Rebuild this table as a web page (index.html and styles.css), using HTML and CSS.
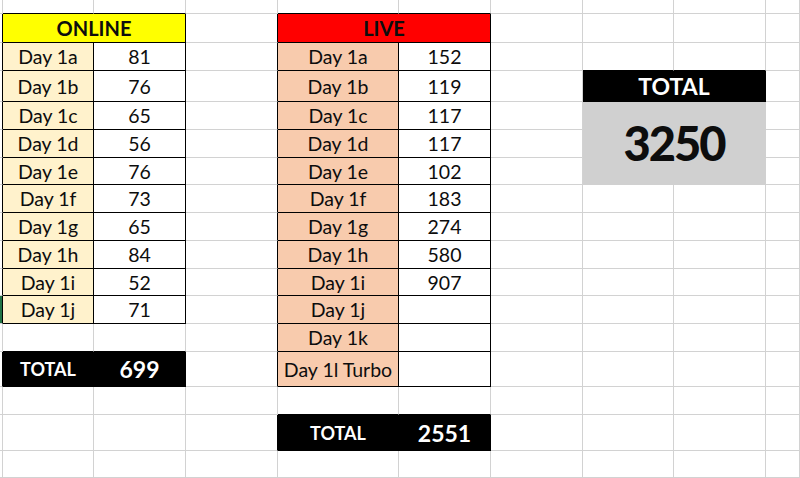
FILE: index.html
```html
<!DOCTYPE html>
<html lang="en">
<head>
<meta charset="utf-8">
<title>Online / Live totals</title>
<link rel="stylesheet" href="styles.css">
</head>
<body>
<div class="sheet">
  <!-- row 0 -->
  <div class="c"></div><div class="c bb"></div><div class="c bb"></div><div class="c"></div><div class="c bb"></div><div class="c bb"></div><div class="c"></div><div class="c"></div><div class="c"></div><div class="c"></div>
  <!-- row 1: headers -->
  <div class="c br"></div><div class="c span2 yel tb hd">ONLINE</div><div class="c br"></div><div class="c span2 red tb hd">LIVE</div><div class="c"></div><div class="c"></div><div class="c"></div><div class="c"></div>
  <!-- row 2 -->
  <div class="c br"></div><div class="c on tb">Day 1a</div><div class="c tb">81</div><div class="c br"></div><div class="c live tb">Day 1a</div><div class="c tb">152</div><div class="c"></div><div class="c bb"></div><div class="c bb"></div><div class="c"></div>
  <!-- row 3 -->
  <div class="c br"></div><div class="c on tb">Day 1b</div><div class="c tb">76</div><div class="c br"></div><div class="c live tb">Day 1b</div><div class="c tb">119</div><div class="c"></div><div class="c span2 blk big-hd">TOTAL</div><div class="c"></div>
  <!-- row 4 -->
  <div class="c br"></div><div class="c on tb">Day 1c</div><div class="c tb">65</div><div class="c br"></div><div class="c live tb">Day 1c</div><div class="c tb">117</div><div class="c"></div><div class="c grand">3250</div><div class="c"></div>
  <!-- row 5 -->
  <div class="c br"></div><div class="c on tb">Day 1d</div><div class="c tb">56</div><div class="c br"></div><div class="c live tb">Day 1d</div><div class="c tb">117</div><div class="c"></div><div class="c"></div>
  <!-- row 6 -->
  <div class="c br"></div><div class="c on tb">Day 1e</div><div class="c tb">76</div><div class="c br"></div><div class="c live tb">Day 1e</div><div class="c tb">102</div><div class="c"></div><div class="c"></div>
  <!-- row 7 -->
  <div class="c br"></div><div class="c on tb">Day 1f</div><div class="c tb">73</div><div class="c br"></div><div class="c live tb">Day 1f</div><div class="c tb">183</div><div class="c"></div><div class="c"></div><div class="c"></div><div class="c"></div>
  <!-- row 8 -->
  <div class="c br"></div><div class="c on tb">Day 1g</div><div class="c tb">65</div><div class="c br"></div><div class="c live tb">Day 1g</div><div class="c tb">274</div><div class="c"></div><div class="c"></div><div class="c"></div><div class="c"></div>
  <!-- row 9 -->
  <div class="c br"></div><div class="c on tb">Day 1h</div><div class="c tb">84</div><div class="c br"></div><div class="c live tb">Day 1h</div><div class="c tb">580</div><div class="c"></div><div class="c"></div><div class="c"></div><div class="c"></div>
  <!-- row 10 -->
  <div class="c br"></div><div class="c on tb">Day 1i</div><div class="c tb">52</div><div class="c br"></div><div class="c live tb">Day 1i</div><div class="c tb">907</div><div class="c"></div><div class="c"></div><div class="c"></div><div class="c"></div>
  <!-- row 11 -->
  <div class="c br sel"></div><div class="c on tb">Day 1j</div><div class="c tb">71</div><div class="c br"></div><div class="c live tb">Day 1j</div><div class="c tb"></div><div class="c"></div><div class="c"></div><div class="c"></div><div class="c"></div>
  <!-- row 12 -->
  <div class="c"></div><div class="c bb"></div><div class="c bb"></div><div class="c br"></div><div class="c live tb">Day 1k</div><div class="c tb"></div><div class="c"></div><div class="c"></div><div class="c"></div><div class="c"></div>
  <!-- row 13 -->
  <div class="c br"></div><div class="c blk tot-lbl">TOTAL</div><div class="c blk tot-num">699</div><div class="c br"></div><div class="c live tb">Day 1l Turbo</div><div class="c tb"></div><div class="c"></div><div class="c"></div><div class="c"></div><div class="c"></div>
  <!-- row 14 -->
  <div class="c"></div><div class="c"></div><div class="c"></div><div class="c"></div><div class="c bb"></div><div class="c bb"></div><div class="c"></div><div class="c"></div><div class="c"></div><div class="c"></div>
  <!-- row 15 -->
  <div class="c"></div><div class="c"></div><div class="c"></div><div class="c br"></div><div class="c blk tot-lbl">TOTAL</div><div class="c blk tot-num">2551</div><div class="c"></div><div class="c"></div><div class="c"></div><div class="c"></div>
  <!-- row 16 -->
  <div class="c"></div><div class="c"></div><div class="c"></div><div class="c"></div><div class="c"></div><div class="c"></div><div class="c"></div><div class="c"></div><div class="c"></div><div class="c"></div>
</div>
</body>
</html>
```

FILE: styles.css
```css
html, body {
  margin: 0;
  padding: 0;
  background: #ffffff;
  overflow: hidden;
}

.sheet {
  display: grid;
  grid-template-columns: 3px 91px 92px 92px 121px 92px 92px 91px 92px 1fr;
  grid-template-rows: 14px 29px 28px 31px 28px 28px 27px 28px 28px 28px 27px 28px 28px 35px 28px 36px 27px;
  width: 800px;
  height: 478px;
  font-family: Lato, "Open Sans", sans-serif;
  color: #0d0d0d;
}

.c {
  box-sizing: border-box;
  border-right: 1px solid #d2d2d2;
  border-bottom: 1px solid #d2d2d2;
  display: flex;
  align-items: center;
  justify-content: center;
  font-size: 19.5px;
  white-space: nowrap;
  overflow: hidden;
  min-width: 0;
}

.br { border-right-color: #000000; }
.bb { border-bottom-color: #000000; }
.tb { border-right-color: #000000; border-bottom-color: #000000; }

.span2 { grid-column: span 2; }

.hd {
  font-weight: 700;
  font-size: 20px;
}

.yel { background: #ffff00; }
.red { background: #ff0000; }
.on { background: #fff2cc; }
.live { background: #f8cbad; }

.sel {
  box-shadow: inset 2px 0 0 #217346;
}

.blk {
  background: #000000;
  color: #ffffff;
  font-weight: 700;
  border-right-color: #000000;
  border-bottom-color: #000000;
}

.tot-lbl { font-size: 18px; }
.tot-num { font-size: 23px; }

.big-hd {
  font-size: 23px;
}

.grand {
  grid-column: span 2;
  grid-row: span 3;
  background: #d0d0d0;
  border-right-color: #d0d0d0;
  border-bottom-color: #d0d0d0;
  font-weight: 900;
  font-size: 47px;
  letter-spacing: -2px;
  color: #0d0d0d;
}
```
